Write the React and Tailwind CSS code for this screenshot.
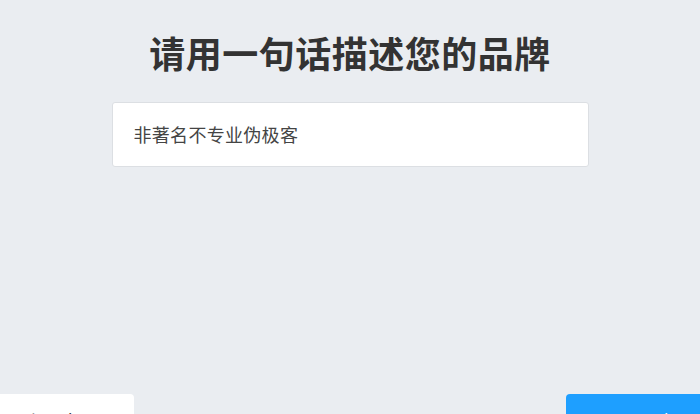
import React, { useState } from 'react'

export default function App() {
  const [brand, setBrand] = useState('非著名不专业伪极客')

  return (
    <div
      className="h-[414px] w-[700px] overflow-hidden bg-[#eaedf1] flex flex-col items-center"
      style={{ fontFamily: '"Noto Sans CJK SC", "Noto Sans", sans-serif' }}
    >
      <h1 className="shrink-0 mt-[28px] h-[48px] leading-[48px] text-[36px] font-bold text-[#333333] tracking-[0.5px]">
        请用一句话描述您的品牌
      </h1>

      <div className="shrink-0 mt-[26px] w-[477px] h-[65px] bg-white border border-[#dcdfe3] rounded-[3px] flex items-center px-[21px]">
        <input
          value={brand}
          onChange={e => setBrand(e.target.value)}
          className="w-full bg-transparent outline-none text-[18px] tracking-[0.3px] text-[#444444]"
        />
      </div>

      {/* bottom actions, cut off by the window edge */}
      <div className="shrink-0 mt-[227px] w-full flex justify-between">
        <button className="shrink-0 -ml-[30px] w-[164px] h-[48px] bg-white rounded-[4px] text-[18px] text-[#333333] flex items-start justify-center pt-[14px]">
          上一步
        </button>
        <button className="shrink-0 -mr-[30px] w-[164px] h-[48px] bg-[#1e9fff] rounded-[4px] text-[18px] text-white flex items-start justify-center pt-[14px]">
          下一步
        </button>
      </div>
    </div>
  )
}
